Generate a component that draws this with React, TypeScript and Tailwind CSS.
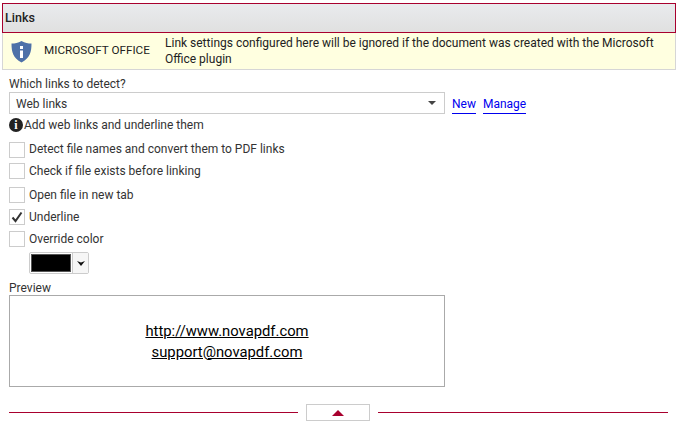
const OPTIONS = [
  { label: "Detect file names and convert them to PDF links", checked: false, cls: "mt-[9px]", labelCls: "pb-[2px]" },
  { label: "Check if file exists before linking", checked: false, cls: "mt-[5px]", labelCls: "" },
  { label: "Open file in new tab", checked: false, cls: "mt-[8px]", labelCls: "" },
  { label: "Underline", checked: true, cls: "mt-[6px]", labelCls: "" },
  { label: "Override color", checked: false, cls: "mt-[6px]", labelCls: "" },
];

function Check({ label, checked, cls, labelCls }: { label: string; checked: boolean; cls: string; labelCls: string }) {
  return (
    <div className={`flex h-[16px] items-center gap-[4px] ${cls}`}>
      <span className="flex h-[16px] w-[16px] items-center justify-center border border-[#cccccc] bg-white">
        {checked && (
          <svg width="12" height="12" viewBox="0 0 12 12">
            <path d="M1.5 6.5 L4.5 10 L10.5 1.5" fill="none" stroke="#333" strokeWidth="2" />
          </svg>
        )}
      </span>
      <span className={`text-[#333] ${labelCls}`}>{label}</span>
    </div>
  );
}

export default function App() {
  return (
    <div className="h-[423px] w-[678px] overflow-hidden bg-white pt-[3px] font-['Roboto',sans-serif] text-[12px] text-[#333]">
      <div className="mx-[2px] flex h-[30px] items-center border border-[#a8002e] bg-gradient-to-b from-[#e9ebee] to-[#e0e0e0] px-[2px] text-[12.5px] font-medium text-[#222]">
        Links
      </div>
      <div className="mx-[2px] flex h-[37px] items-center border-x border-b border-[#d6d6d6] bg-[#ffffe0] text-[#222]">
        <svg className="ml-[7px]" width="23" height="23" viewBox="0 0 23 23">
          <path d="M11.5 1 C8 3 5 3.5 1.5 3.5 C1.5 12 3 18 11.5 22.5 C20 18 21.5 12 21.5 3.5 C18 3.5 15 3 11.5 1 Z" fill="#4e71a8" />
          <rect x="10" y="6" width="3" height="3" fill="#fff" />
          <rect x="10" y="10.5" width="3" height="7.5" fill="#fff" />
        </svg>
        <span className="ml-[11px] w-[121px] shrink-0 text-[11.7px]">MICROSOFT OFFICE</span>
        <p className="w-[510px] leading-[16px]">
          Link settings configured here will be ignored if the document was created with the Microsoft Office plugin
        </p>
      </div>
      <div className="mx-[9px]">
        <div className="mt-[6px] h-[16px] leading-[16px]">Which links to detect?</div>
        <div className="flex items-center">
          <div className="flex h-[22px] w-[436px] items-center justify-between border border-[#cccccc] bg-white pl-[6px] pr-[8px]">
            <span className="pt-[1px]">Web links</span>
            <span className="h-0 w-0 border-x-[4px] border-t-[4px] border-x-transparent border-t-[#444]" />
          </div>
          <a className="ml-[7px] mt-[2px] border-b border-[#0000ee] text-[#0000ee]">New</a>
          <a className="ml-[7px] mt-[2px] border-b border-[#0000ee] text-[#0000ee]">Manage</a>
        </div>
        <div className="mt-[3px] flex h-[16px] items-center gap-[1px]">
          <span className="flex h-[14px] w-[14px] items-center justify-center rounded-full bg-[#222] font-['Liberation_Serif',serif] text-[12px] font-bold text-white">
            i
          </span>
          Add web links and underline them
        </div>
        {OPTIONS.map((o) => (
          <Check key={o.label} {...o} />
        ))}
        <div className="ml-[20px] mt-[5px] flex h-[22px] w-[60px] rounded-[2px] border border-[#cccccc]">
          <div className="m-[1px] flex-1 border border-[#555] bg-black" />
          <div className="flex w-[16px] items-center justify-center border-l border-[#cccccc] bg-[#f6f6f6]">
            <svg width="8" height="5" viewBox="0 0 8 5">
              <path d="M0 0 L4 1.5 L8 0 L4 5 Z" fill="#111" />
            </svg>
          </div>
        </div>
        <div className="mt-[5px] h-[16px] pt-[1px] leading-[16px]">Preview</div>
        <div className="flex h-[92px] w-[436px] flex-col items-center justify-center border border-[#aaaaaa] pt-[1px] text-[14.8px] leading-[21px] text-black underline">
          <span>http://www.novapdf.com</span>
          <span>support@novapdf.com</span>
        </div>
        <div className="mr-[1px] mt-[17px] flex items-center">
          <div className="h-px flex-1 bg-[#a8002e]" />
          <div className="ml-[8px] flex h-[17px] w-[64px] items-center justify-center border border-[#cccccc]">
            <span className="h-0 w-0 border-x-[6px] border-b-[6px] border-x-transparent border-b-[#a8002e]" />
          </div>
          <div className="ml-[8px] h-px w-[290px] bg-[#a8002e]" />
        </div>
      </div>
    </div>
  );
}
